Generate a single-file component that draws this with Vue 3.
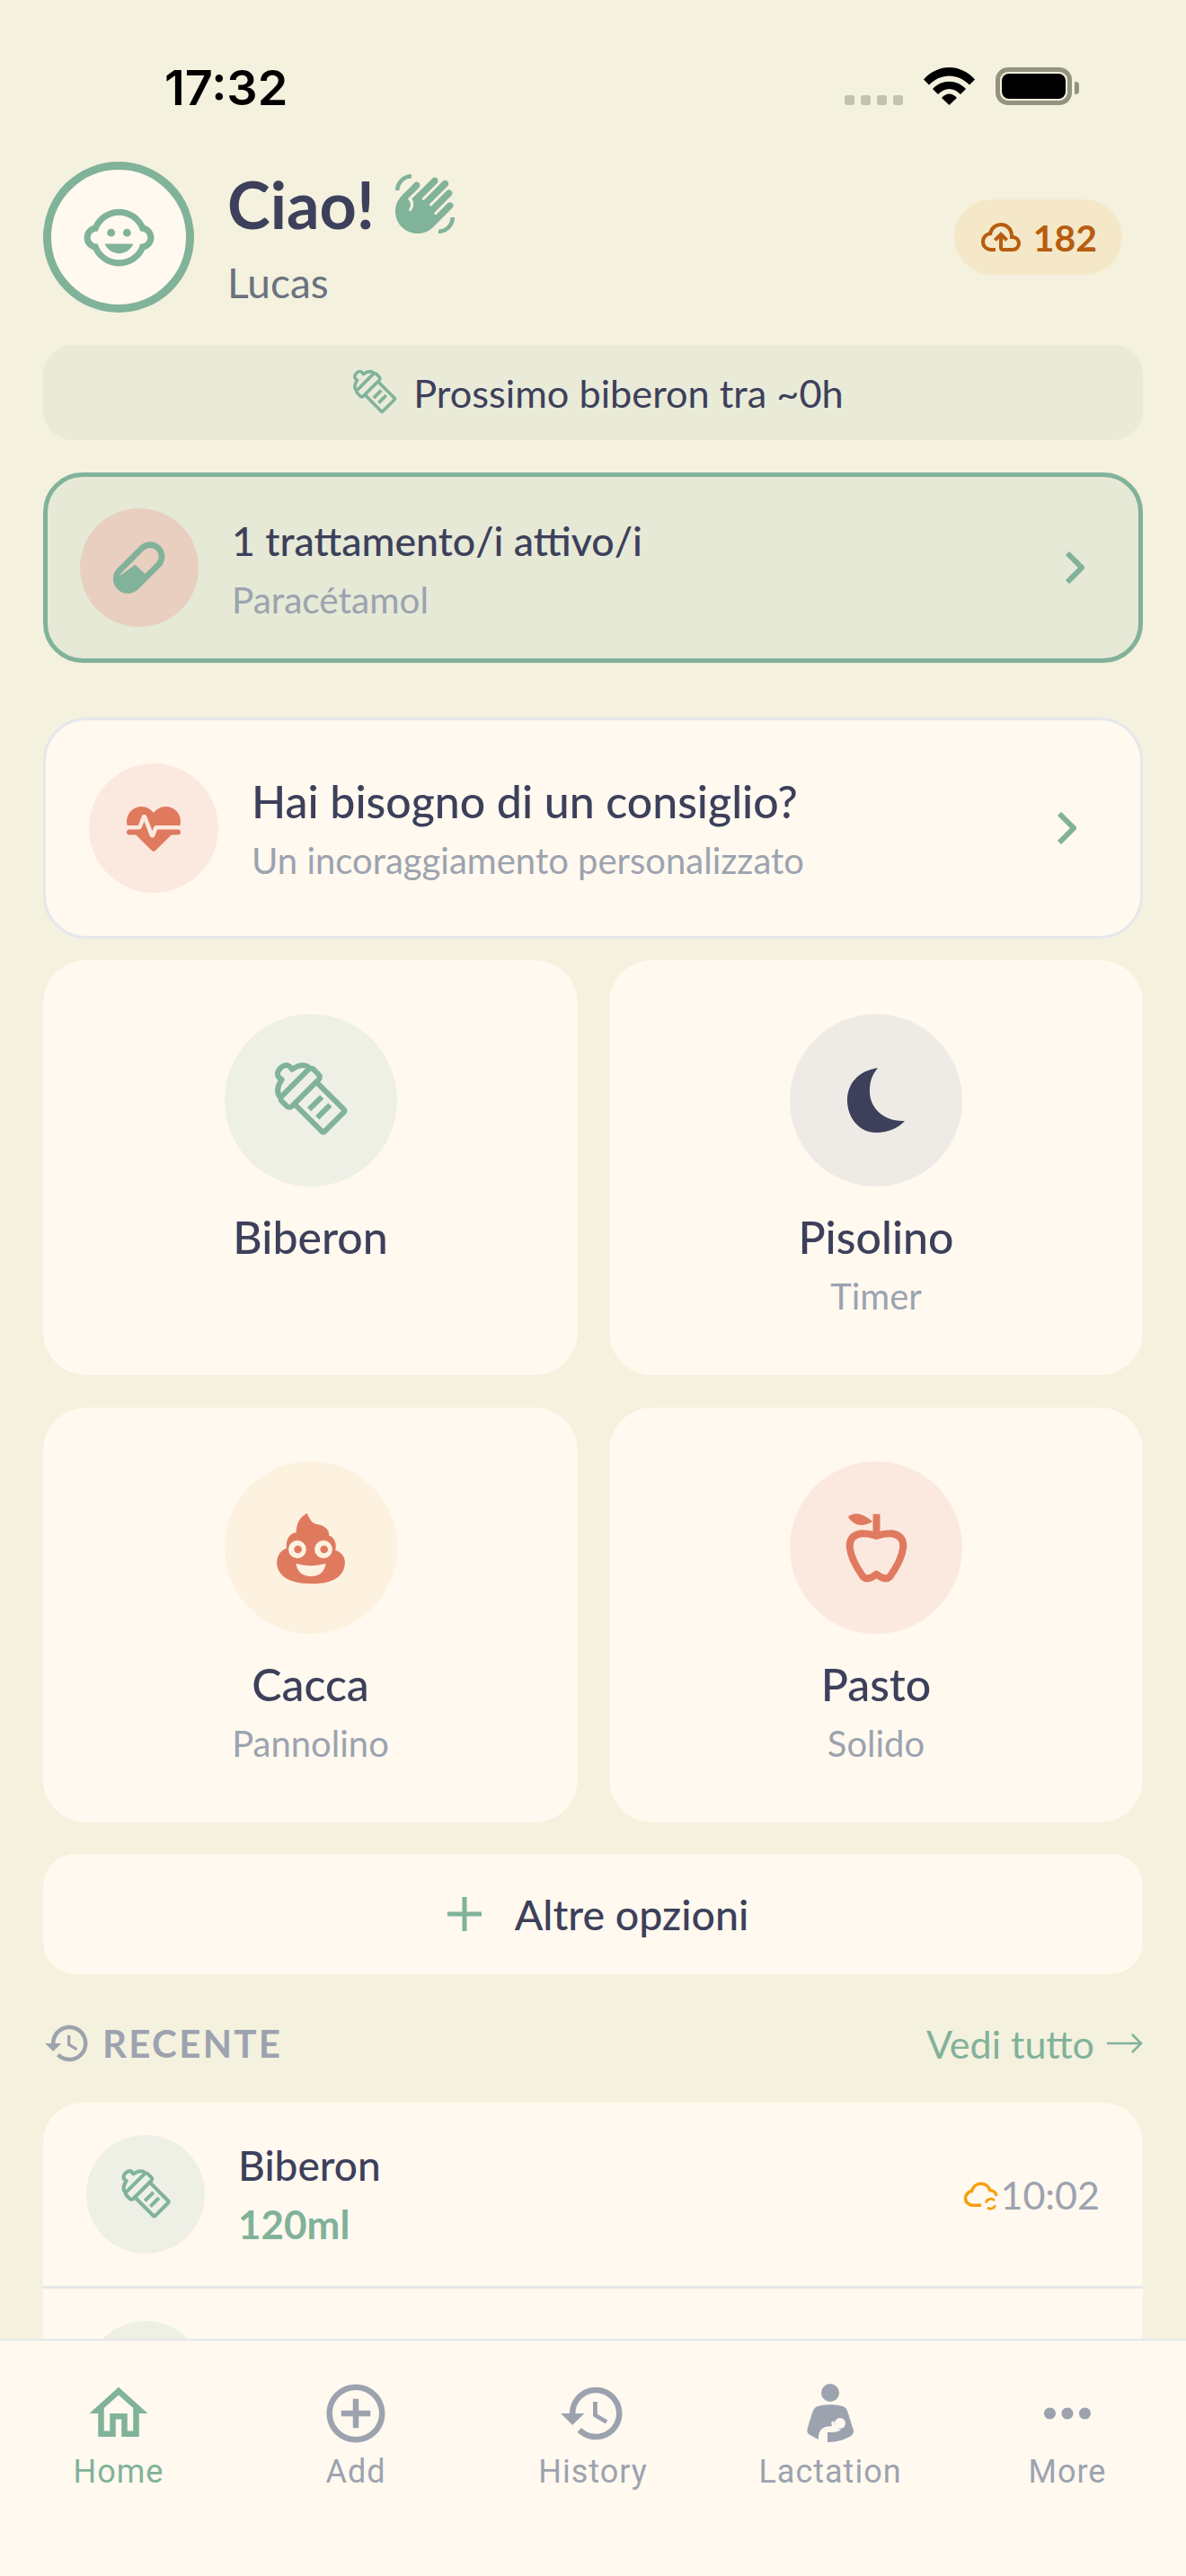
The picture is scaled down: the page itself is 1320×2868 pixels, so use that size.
<template>
  <div class="screen">
    <div class="status-bar">
      <span class="time">17:32</span>
      <div class="status-icons">
        <div class="signal"><i></i><i></i><i></i><i></i></div>
        <svg class="wifi" viewBox="0 0 57 42"><path d="M0 13.5C16-4.500 41-4.500 57 13.500L51 19.500C38 6 19 6 6 19.500Z"/><path d="M10 24C20 13 37 13 47 24L41 30C33 22 24 22 16 30Z"/><path d="M20 34C25 28 32 28 37 34L28.500 42Z"/></svg>
        <div class="battery"><div class="battery-fill"></div></div>
      </div>
    </div>

    <main class="content">
      <header class="header">
        <div class="avatar">
          <svg viewBox="0 0 24 24" width="85" height="85" fill="#81b29a"><path d="M14.5 9.25A1.25 1.25 0 0 1 15.75 10.5A1.25 1.25 0 0 1 14.5 11.75A1.25 1.25 0 0 1 13.25 10.5A1.25 1.25 0 0 1 14.5 9.25M9.5 9.25A1.25 1.25 0 0 1 10.75 10.5A1.25 1.25 0 0 1 9.5 11.75A1.25 1.25 0 0 1 8.25 10.5A1.25 1.25 0 0 1 9.5 9.25M7.5 14H16.5C15.74 15.77 14 17 12 17C10 17 8.26 15.77 7.5 14M1 12C1 10.19 2.2 8.66 3.86 8.17C5.29 5.11 8.4 3 12 3C15.6 3 18.71 5.11 20.15 8.17C21.8 8.66 23 10.19 23 12C23 13.81 21.8 15.34 20.15 15.83C18.71 18.89 15.6 21 12 21C8.4 21 5.29 18.89 3.86 15.83C2.2 15.34 1 13.81 1 12M12 5C8.82 5 6.14 7.12 5.28 10.03C5.19 10.03 5.1 10 5 10A2 2 0 0 0 3 12A2 2 0 0 0 5 14C5.1 14 5.19 13.97 5.28 13.97C6.14 16.88 8.82 19 12 19C15.18 19 17.86 16.88 18.72 13.97C18.81 13.97 18.9 14 19 14A2 2 0 0 0 21 12A2 2 0 0 0 19 10C18.9 10 18.81 10.03 18.72 10.03C17.86 7.12 15.18 5 12 5Z"/></svg>
        </div>
        <div class="greeting">
          <div class="hello">
            <span>Ciao!</span>
            <svg viewBox="0 0 24 24" width="72" height="72" fill="#81b29a"><path d="M23 17C23 20.31 20.31 23 17 23V21.500C19.500 21.500 21.500 19.500 21.500 17H23M1 7C1 3.690 3.690 1 7 1V2.500C4.500 2.500 2.500 4.500 2.500 7H1M8 4.320L3.410 8.920C.19 12.140.19 17.370 3.410 20.590S11.860 23.810 15.080 20.590L22.150 13.500C22.640 13.030 22.640 12.240 22.150 11.750C21.660 11.260 20.870 11.260 20.380 11.750L15.960 16.170L15.250 15.460L21.790 8.920C22.280 8.430 22.280 7.640 21.790 7.150S20.500 6.660 20 7.150L14.190 12.960L13.500 12.250L20.360 5.390C20.850 4.900 20.850 4.110 20.360 3.620S19.080 3.130 18.590 3.620L11.500 10.710L10.820 10L16.500 4.320C17 3.830 17 3.040 16.500 2.550S15.210 2.060 14.720 2.550L7.150 10.120C8.070 11.590 7.890 13.500 6.620 14.800L5.910 14.090C6.900 13.100 6.900 11.500 5.910 10.500L5.560 10.170L9.770 5.960C10.260 5.470 10.260 4.680 9.770 4.190C9.280 3.700 8.500 3.700 8 4.190V4.320Z"/></svg>
          </div>
          <div class="baby-name">Lucas</div>
        </div>
        <div class="sync-badge">
          <svg viewBox="0 0 24 24" width="48" height="48" fill="#b85c0f"><path d="M6.500 20Q4.220 20 2.610 18.430 1 16.850 1 14.580 1 12.630 2.170 11.100 3.350 9.570 5.250 9.150 5.880 6.850 7.750 5.430 9.630 4 12 4 14.930 4 16.960 6.040 19 8.070 19 11 20.730 11.200 21.860 12.500 23 13.780 23 15.500 23 17.380 21.690 18.690 20.380 20 18.500 20H13Q12.180 20 11.590 19.410 11 18.830 11 18V12.850L9.400 14.400L8 13L12 9L16 13L14.600 14.400L13 12.850V18H18.500Q19.550 18 20.270 17.270 21 16.550 21 15.500 21 14.450 20.270 13.730 19.550 13 18.500 13H17V11Q17 8.930 15.540 7.460 14.070 6 12 6 9.930 6 8.460 7.460 7 8.930 7 11H6.500Q5.050 11 4.030 12.030 3 13.050 3 14.500 3 15.950 4.030 17 5.050 18 6.500 18H9V20Z"/></svg>
          <span>182</span>
        </div>
      </header>

      <div class="next-feed">
        <svg class="bottle" viewBox="-23 -21 120 120" width="72" height="72">
          <g transform="rotate(-45 40 40)"><path d="M17 10C18 1 27-1 32-2C30-9 34-12 40-12C46-12 50-9 48-2C53-1 62 1 63 10"/><rect x="15" y="11" width="50" height="16" rx="4"/><path d="M22.700 28V70Q22.700 72.500 25 72.500H55Q57.300 72.500 57.300 70V28"/><path d="M30 43H50M30 56H50"/></g>
        </svg>
        <span>Prossimo biberon tra ~0h</span>
      </div>

      <div class="treatment-card">
        <div class="row-circle treatment-circle">
          <svg viewBox="196 68 180 180" width="60" height="60"><rect x="193.500" y="119" width="183" height="78" rx="39" transform="rotate(-45 285 158)" fill="none" stroke="#81b29a" stroke-width="20"/><path d="M214 190L272 148L310 183L275 225Q250 248 220 235Q195 210 214 190Z" fill="#81b29a"/></svg>
        </div>
        <div class="row-text">
          <div class="row-title">1 trattamento/i attivo/i</div>
          <div class="row-sub">Paracétamol</div>
        </div>
        <svg class="chevron" viewBox="0 0 22 36" width="22" height="36"><path d="M3 2L19 18L3 34"/></svg>
      </div>

      <div class="advice-card">
        <div class="row-circle advice-circle">
          <svg viewBox="0 0 24 24" width="72" height="72" fill="#e07a5f"><path d="M7.500 4A5.500 5.500 0 0 0 2 9.500C2 10 2.090 10.500 2.220 11H6.300L7.570 7.630C7.870 6.830 9.050 6.750 9.430 7.630L11.500 13L12.090 11.580C12.220 11.250 12.570 11 13 11H21.780C21.910 10.500 22 10 22 9.500A5.500 5.500 0 0 0 16.500 4C14.640 4 13 4.930 12 6.340C11 4.930 9.360 4 7.500 4M3 12.500A1 1 0 0 0 2 13.500A1 1 0 0 0 3 14.500H5.440L11 20C12 20.900 12 20.900 13 20L18.560 14.500H21A1 1 0 0 0 22 13.500A1 1 0 0 0 21 12.500H13.400L12.470 14.800C12.070 15.810 10.920 15.670 10.550 14.830L8.500 9.500L7.540 11.830C7.390 12.210 7.050 12.500 6.600 12.500H3Z"/></svg>
        </div>
        <div class="row-text">
          <div class="row-title">Hai bisogno di un consiglio?</div>
          <div class="row-sub">Un incoraggiamento personalizzato</div>
        </div>
        <svg class="chevron" viewBox="0 0 22 36" width="22" height="36"><path d="M3 2L19 18L3 34"/></svg>
      </div>

      <div class="grid">
        <div class="tile">
          <div class="tile-circle tint-green">
            <svg class="bottle" viewBox="-23 -21 120 120" width="120" height="120">
              <g transform="rotate(-45 40 40)"><path d="M17 10C18 1 27-1 32-2C30-9 34-12 40-12C46-12 50-9 48-2C53-1 62 1 63 10"/><rect x="15" y="11" width="50" height="16" rx="4"/><path d="M22.700 28V70Q22.700 72.500 25 72.500H55Q57.300 72.500 57.300 70V28"/><path d="M30 43H50M30 56H50"/></g>
            </svg>
          </div>
          <div class="tile-label">Biberon</div>
        </div>
        <div class="tile">
          <div class="tile-circle tint-navy">
            <svg viewBox="0 0 64 72" width="64" height="72" fill="#3d405b"><path d="M34 0C12 3 0 18 0 36C0 56 14 72 32 72C46 72 58 66 64 59C40 60 24 44 25 24C25 15 28 7 34 0Z"/></svg>
          </div>
          <div class="tile-label">Pisolino</div>
          <div class="tile-sub">Timer</div>
        </div>
        <div class="tile">
          <div class="tile-circle tint-yellow">
            <svg viewBox="200 215 235 245" width="78" height="81">
              <path d="M305 220C280 232 268 255 268 285C248 288 232 305 236 338C215 345 202 365 203 390C205 420 228 458 320 458C410 458 432 420 432 385C432 365 418 350 400 345C406 320 395 300 378 295C382 275 360 260 340 258C322 255 312 240 305 220Z" fill="#e07a5f"/>
              <circle cx="272" cy="342" r="30" fill="#fdf1df"/><circle cx="360" cy="342" r="30" fill="#fdf1df"/>
              <circle cx="274" cy="342" r="13" fill="#e07a5f"/><circle cx="362" cy="342" r="13" fill="#e07a5f"/>
              <path d="M267 390Q318 405 368 390Q360 433 318 433Q275 433 267 390Z" fill="#fdf1df"/>
            </svg>
          </div>
          <div class="tile-label">Cacca</div>
          <div class="tile-sub">Pannolino</div>
        </div>
        <div class="tile">
          <div class="tile-circle tint-orange">
            <svg viewBox="205 220 220 245" width="73" height="82">
              <path d="M315 303Q290 295 265 295Q225 300 225 340Q230 385 270 440Q285 455 315 432Q345 455 360 440Q400 385 405 340Q405 300 365 295Q340 295 315 303Z" fill="none" stroke="#e07a5f" stroke-width="24" stroke-linejoin="round"/>
              <rect x="303" y="230" width="24" height="70" fill="#e07a5f"/>
              <path d="M220 240Q250 212 302 255Q250 285 220 240Z" fill="#e07a5f"/>
            </svg>
          </div>
          <div class="tile-label">Pasto</div>
          <div class="tile-sub">Solido</div>
        </div>
      </div>

      <div class="more-options">
        <svg viewBox="0 0 38 38" width="38" height="38"><path d="M19 0V38M0 19H38" stroke="#81b29a" stroke-width="5" fill="none"/></svg>
        <span>Altre opzioni</span>
      </div>

      <div class="recent-head">
        <div class="recent-title">
          <svg viewBox="0 0 24 24" width="54" height="54" fill="#9ca3af"><path d="M13 3c-4.970 0-9 4.030-9 9H1l3.890 3.890.07.14L9 12H6c0-3.870 3.130-7 7-7s7 3.130 7 7-3.130 7-7 7c-1.930 0-3.680-.79-4.940-2.060l-1.420 1.420C8.270 19.990 10.510 21 13 21c4.970 0 9-4.030 9-9s-4.030-9-9-9zm-1 5v5l4.280 2.540.72-1.210-3.500-2.080V8H12z"/></svg>
          <span>RECENTE</span>
        </div>
        <div class="see-all">
          <span>Vedi tutto</span>
          <svg viewBox="0 0 40 24" width="40" height="24" fill="none" stroke="#81b29a" stroke-width="2.500"><path d="M0 12H38M28 2L38 12L28 22"/></svg>
        </div>
      </div>

      <div class="recent-list">
        <div class="recent-row" v-for="item in recent" :key="item.id">
          <div class="row-circle recent-circle">
            <svg v-if="item.title" class="bottle" viewBox="-23 -21 120 120" width="81" height="81">
              <g transform="rotate(-45 40 40)"><path d="M17 10C18 1 27-1 32-2C30-9 34-12 40-12C46-12 50-9 48-2C53-1 62 1 63 10"/><rect x="15" y="11" width="50" height="16" rx="4"/><path d="M22.700 28V70Q22.700 72.500 25 72.500H55Q57.300 72.500 57.300 70V28"/><path d="M30 43H50M30 56H50"/></g>
            </svg>
          </div>
          <div class="row-text" v-if="item.title">
            <div class="recent-name">{{ item.title }}</div>
            <div class="recent-amount">{{ item.amount }}</div>
          </div>
          <div class="recent-time" v-if="item.title">
            <svg viewBox="0 0 24 24" width="42" height="42" fill="none" stroke="#f59e0b" stroke-width="2"><path d="M12 19H6.500A4.500 4.500 0 0 1 6 10.030A6 6 0 0 1 17.600 9.500A4.500 4.500 0 0 1 21.800 13"/><path d="M15 17.500A3.200 3.200 0 0 1 20.500 16M21 19A3.200 3.200 0 0 1 16 20.500" stroke-width="1.500"/></svg>
            <span>{{ item.time }}</span>
          </div>
        </div>
      </div>
    </main>

    <nav class="tabbar">
      <div class="tab active">
        <svg viewBox="0 0 24 24" width="78" height="78"><path d="M12 5.690l5 4.500V18h-2v-6H9v6H7v-7.810l5-4.500M12 3L2 12h3v8h6v-6h2v6h6v-8h3L12 3z"/></svg>
        <span>Home</span>
      </div>
      <div class="tab">
        <svg viewBox="0 0 24 24" width="78" height="78"><path d="M13 7h-2v4H7v2h4v4h2v-4h4v-2h-4V7zm-1-5C6.480 2 2 6.480 2 12s4.480 10 10 10 10-4.480 10-10S17.520 2 12 2zm0 18c-4.410 0-8-3.590-8-8s3.590-8 8-8 8 3.590 8 8-3.590 8-8 8z"/></svg>
        <span>Add</span>
      </div>
      <div class="tab">
        <svg viewBox="0 0 24 24" width="78" height="78"><path d="M13 3c-4.970 0-9 4.030-9 9H1l3.890 3.890.07.14L9 12H6c0-3.870 3.130-7 7-7s7 3.130 7 7-3.130 7-7 7c-1.930 0-3.680-.79-4.940-2.060l-1.420 1.420C8.270 19.990 10.510 21 13 21c4.970 0 9-4.030 9-9s-4.030-9-9-9zm-1 5v5l4.280 2.540.72-1.210-3.500-2.080V8H12z"/></svg>
        <span>History</span>
      </div>
      <div class="tab">
        <svg viewBox="0 0 78 78" width="78" height="78"><circle cx="39" cy="16" r="10"/><path d="M22 33C26 28 52 28 56 33C58 35 59 38 64 55C66 59 65 62 62 64C56 68 47 71 36 71V60C42 60 48 60 51 57C46 56 44 52 43 47L40 49L41 53C33 54 26 54 26 68C22 66 18 64 15 62C13 60 13 58 14 55C19 38 20 35 22 33Z"/><circle cx="50" cy="50" r="6" fill="#fff9ef"/></svg>
        <span>Lactation</span>
      </div>
      <div class="tab">
        <svg viewBox="0 0 24 24" width="78" height="78"><path d="M6 10c-1.100 0-2 .9-2 2s.9 2 2 2 2-.9 2-2-.9-2-2-2zm12 0c-1.100 0-2 .9-2 2s.9 2 2 2 2-.9 2-2-.9-2-2-2zm-6 0c-1.100 0-2 .9-2 2s.9 2 2 2 2-.9 2-2-.9-2-2-2z"/></svg>
        <span>More</span>
      </div>
    </nav>
  </div>
</template>

<script setup>
const recent = [
  { id: 1, title: 'Biberon', amount: '120ml', time: '10:02' },
  { id: 2 }
];
</script>

<style scoped>
.screen {
  position: relative; width: 1320px; height: 2868px; overflow: hidden; background: #f4f1de;
  font-family: Lato, "Noto Sans", sans-serif; color: #3d405b;
}

.status-bar { height: 180px; display: flex; justify-content: space-between; padding: 66px 127px 0 183px; box-sizing: border-box; }
.time { font-family: Inter, sans-serif; font-weight: 600; font-size: 54px; line-height: 64px; color: #000; }
.status-icons { display: flex; align-items: flex-start; padding-top: 9px; }
.signal { display: flex; gap: 7px; margin: 31px 23px 0 0; }
.signal i { width: 11px; height: 11px; border-radius: 3px; background: #c3c2b1; }
.wifi { width: 57px; height: 42px; margin-right: 23px; }
.battery { position: relative; width: 85px; height: 42px; box-sizing: border-box; border: 5px solid #93937f; border-radius: 14px; padding: 2px; }
.battery::after { content: ''; position: absolute; left: 83px; top: 11px; width: 5px; height: 14px; background: #93937f; border-radius: 0 4px 4px 0; }
.battery-fill { height: 100%; background: #000; border-radius: 8px; }

.content { padding: 0 48px; }
.header { display: flex; align-items: center; }
.avatar {
  width: 168px; height: 168px; box-sizing: border-box; border: 9px solid #81b29a; border-radius: 50%;
  background: #fff9ef; display: flex; align-items: center; justify-content: center;
}
.greeting { margin-left: 37px; flex: 1; }
.hello { display: flex; align-items: center; gap: 20px; font-size: 72px; font-weight: 700; line-height: 84px; }
.baby-name { margin-top: 18px; font-size: 46px; line-height: 56px; color: #6b7280; }
.sync-badge {
  display: flex; align-items: center; gap: 12px; height: 84px; padding: 0 28px; margin-right: 23px; box-sizing: border-box;
  background: #f4e8c8; border-radius: 42px; color: #b85c0f; font-size: 41px; font-weight: 700;
}

.next-feed {
  margin-top: 36px; height: 106px; display: flex; align-items: center; justify-content: center; gap: 7px;
  background: #e9ebd8; border-radius: 33px; font-size: 43.300px;
}
.bottle { overflow: visible; fill: none; stroke: #81b29a; stroke-width: 6; stroke-linejoin: round; }

.treatment-card {
  margin-top: 36px; height: 212px; box-sizing: border-box; display: flex; align-items: center; padding: 0 60px 0 36px;
  background: #e5e9d6; border: 5px solid #81b29a; border-radius: 44px;
}
.advice-card {
  margin-top: 61px; height: 246px; box-sizing: border-box; display: flex; align-items: center; padding: 0 71px 0 48px;
  background: #fff9ef; border: 3px solid #e5e7eb; border-radius: 48px;
}
.row-circle { flex: none; display: flex; align-items: center; justify-content: center; border-radius: 50%; }
.treatment-circle { width: 132px; height: 132px; background: #e8cfc0; }
.advice-circle { width: 144px; height: 144px; background: #fbe9df; }
.row-text { flex: 1; margin-left: 37px; }
.row-title { font-size: 44.700px; font-weight: 500; line-height: 58px; }
.row-sub { margin-top: 13px; font-size: 40.500px; line-height: 48px; color: #9ca3af; }
.advice-card .row-title { font-size: 50px; }
.advice-card .row-sub { font-size: 40px; }
.chevron { flex: none; fill: none; stroke: #81b29a; stroke-width: 6; }

.grid { margin-top: 24px; display: grid; grid-template-columns: 595px 594px; gap: 36px 35px; }
.tile {
  height: 462px; box-sizing: border-box; padding-top: 60px; display: flex; flex-direction: column; align-items: center;
  background: #fff9ef; border-radius: 48px;
}
.tile-circle { width: 192px; height: 192px; border-radius: 50%; display: flex; align-items: center; justify-content: center; }
.tint-green { background: #eef0e6; }
.tint-navy { background: #eeebe6; }
.tint-yellow { background: #fdf1df; }
.tint-orange { background: #fbe9df; }
.tile-label { margin-top: 26px; font-size: 50px; font-weight: 500; line-height: 60px; }
.tile-sub { margin-top: 12px; font-size: 40px; line-height: 48px; color: #9ca3af; }

.more-options {
  margin-top: 35px; height: 134px; box-sizing: border-box; padding-left: 11px; display: flex; align-items: center; justify-content: center; gap: 37px;
  background: #fff9ef; border-radius: 36px; font-size: 46.500px; font-weight: 500;
}

.recent-head { height: 143px; box-sizing: border-box; padding-top: 11px; display: flex; align-items: center; justify-content: space-between; }
.recent-title { display: flex; align-items: center; gap: 12px; font-size: 42px; font-weight: 700; letter-spacing: 2.300px; color: #9ca3af; }
.see-all { display: flex; align-items: center; gap: 14px; font-size: 43px; color: #81b29a; }

.recent-list { background: #fff9ef; border-radius: 44px; }
.recent-row { display: flex; align-items: center; height: 207px; box-sizing: border-box; padding: 0 48px; border-bottom: 3px solid #e5e7eb; }
.recent-circle { width: 132px; height: 132px; background: #eef0e6; }
.recent-name { font-size: 46px; font-weight: 500; line-height: 56px; }
.recent-amount { margin-top: 10px; font-size: 44px; font-weight: 700; line-height: 54px; color: #81b29a; }
.recent-time { display: flex; align-items: center; font-size: 43px; color: #9ca3af; }

.tabbar {
  position: absolute; left: 0; right: 0; bottom: 0; height: 264px; box-sizing: border-box; padding-top: 42px;
  display: grid; grid-template-columns: repeat(5, 264px); align-items: start;
  background: #fff9ef; border-top: 2px solid #e5e7eb;
}
.tab { display: flex; flex-direction: column; align-items: center; fill: #9ca3af; color: #9ca3af; font-family: Roboto, sans-serif; font-size: 36px; font-weight: 400; line-height: 44px; letter-spacing: 1px; }
.tab span { margin-top: 4px; }
.tab.active { fill: #81b29a; color: #81b29a; }
</style>
